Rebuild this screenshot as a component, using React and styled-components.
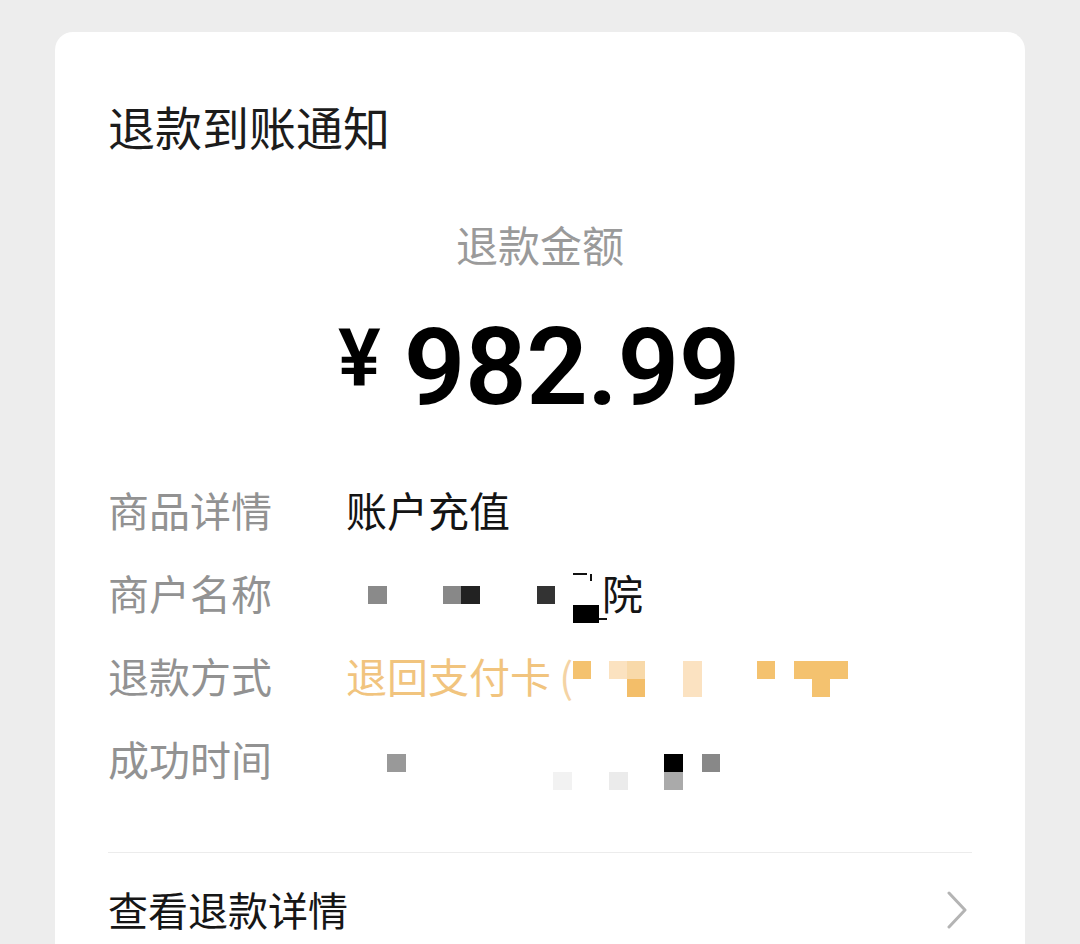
import React from "react";
import styled, { createGlobalStyle } from "styled-components";

const GlobalStyle = createGlobalStyle`
  html, body {
    margin: 0;
    padding: 0;
    background: #ededed;
  }
  body {
    font-family: "Noto Sans CJK SC", "Noto Sans", sans-serif;
    overflow: hidden;
  }
`;

const Page = styled.div`
  min-height: 944px;
  padding: 32px 55px 0;
  box-sizing: border-box;
`;

const Card = styled.div`
  background: #fff;
  border-radius: 18px 18px 0 0;
  padding: 71px 53px 60px;
  min-height: 900px;
  box-sizing: border-box;
`;

const Title = styled.div`
  font-size: 47px;
  line-height: 46px;
  color: #1c1c1c;
`;

const Caption = styled.div`
  margin-top: 74px;
  text-align: center;
  font-size: 42px;
  line-height: 42px;
  color: #9a9a9a;
`;

const Amount = styled.div`
  margin-top: 48px;
  display: flex;
  justify-content: center;
  align-items: flex-start;
  gap: 23px;
  font-family: Roboto, "Liberation Sans", sans-serif;
  font-weight: 600;
  color: #000;
  padding-right: 2px;
`;

const Yen = styled.span`
  font-size: 80px;
  line-height: 80px;
  margin-top: 5px;
`;

const Figure = styled.span`
  font-size: 108px;
  line-height: 108px;
  letter-spacing: -0.5px;
`;

const Rows = styled.div`
  margin-top: 46px;
`;

const Row = styled.div`
  display: flex;
  align-items: center;
  height: 83px;
  font-size: 41px;
`;

const Label = styled.span`
  width: 238px;
  flex-shrink: 0;
  color: #929292;
`;

const Value = styled.span`
  display: flex;
  align-items: center;
  color: ${(p) => (p.$accent ? "#f1c47e" : "#141414")};
`;

const Paren = styled.span`
  width: 22px;
  text-align: right;
  color: #f4d3a4;
`;

const Divider = styled.div`
  margin-top: 53px;
  height: 1px;
  background: #ececec;
`;

const Footer = styled.div`
  display: flex;
  align-items: center;
  justify-content: space-between;
  padding-top: 36px;
  font-size: 40px;
  line-height: 41px;
  color: #161616;
`;

const Chevron = styled.svg`
  width: 24px;
  height: 38px;
  margin-right: 3px;
`;

function Mosaic({ width, cells }) {
  return (
    <svg width={width} height={41} style={{ overflow: "visible", flexShrink: 0 }}>
      {cells.map(([x, y, w, h, c], i) => (
        <rect key={i} x={x} y={y} width={w} height={h} fill={c} />
      ))}
    </svg>
  );
}

const merchantCells = [
  [22, 15, 19, 18, "#8a8a8a"],
  [97, 15, 18, 18, "#888"],
  [115, 15, 19, 18, "#222"],
  [191, 15, 18, 18, "#333"],
  [227, 2, 14, 2, "#111"],
  [244, 3, 2, 7, "#111"],
  [227, 34, 26, 18, "#000"],
  [253, 47, 8, 2, "#111"],
];

const cardCells = [
  [0, 7, 18, 18, "#f4c26f"],
  [36, 7, 18, 18, "#fbe2c0"],
  [54, 7, 18, 18, "#f8d9a9"],
  [54, 25, 18, 18, "#f3be69"],
  [110, 7, 19, 36, "#fbe2c1"],
  [184, 7, 18, 18, "#f4c26f"],
  [221, 7, 54, 18, "#f4c26f"],
  [239, 25, 18, 18, "#f4c26f"],
];

const timeCells = [
  [41, 17, 19, 18, "#999"],
  [207, 35, 19, 18, "#f2f2f2"],
  [263, 35, 19, 18, "#ebebeb"],
  [318, 17, 19, 18, "#000"],
  [318, 35, 19, 18, "#aaa"],
  [356, 17, 18, 18, "#888"],
];

export default function App() {
  return (
    <>
      <GlobalStyle />
      <Page>
        <Card>
          <Title>退款到账通知</Title>
          <Caption>退款金额</Caption>
          <Amount>
            <Yen>¥</Yen>
            <Figure>982.99</Figure>
          </Amount>
          <Rows>
            <Row>
              <Label>商品详情</Label>
              <Value>账户充值</Value>
            </Row>
            <Row>
              <Label>商户名称</Label>
              <Value>
                <Mosaic width={256} cells={merchantCells} />
                院
              </Value>
            </Row>
            <Row>
              <Label>退款方式</Label>
              <Value $accent>
                退回支付卡
                <Paren>(</Paren>
                <Mosaic width={280} cells={cardCells} />
              </Value>
            </Row>
            <Row>
              <Label>成功时间</Label>
              <Value>
                <Mosaic width={380} cells={timeCells} />
              </Value>
            </Row>
          </Rows>
          <Divider />
          <Footer>
            <span>查看退款详情</span>
            <Chevron viewBox="0 0 24 38">
              <path
                d="M4 2 L20 19 L4 36"
                fill="none"
                stroke="#b4b4b4"
                strokeWidth="3"
                strokeLinecap="round"
                strokeLinejoin="round"
              />
            </Chevron>
          </Footer>
        </Card>
      </Page>
    </>
  );
}
